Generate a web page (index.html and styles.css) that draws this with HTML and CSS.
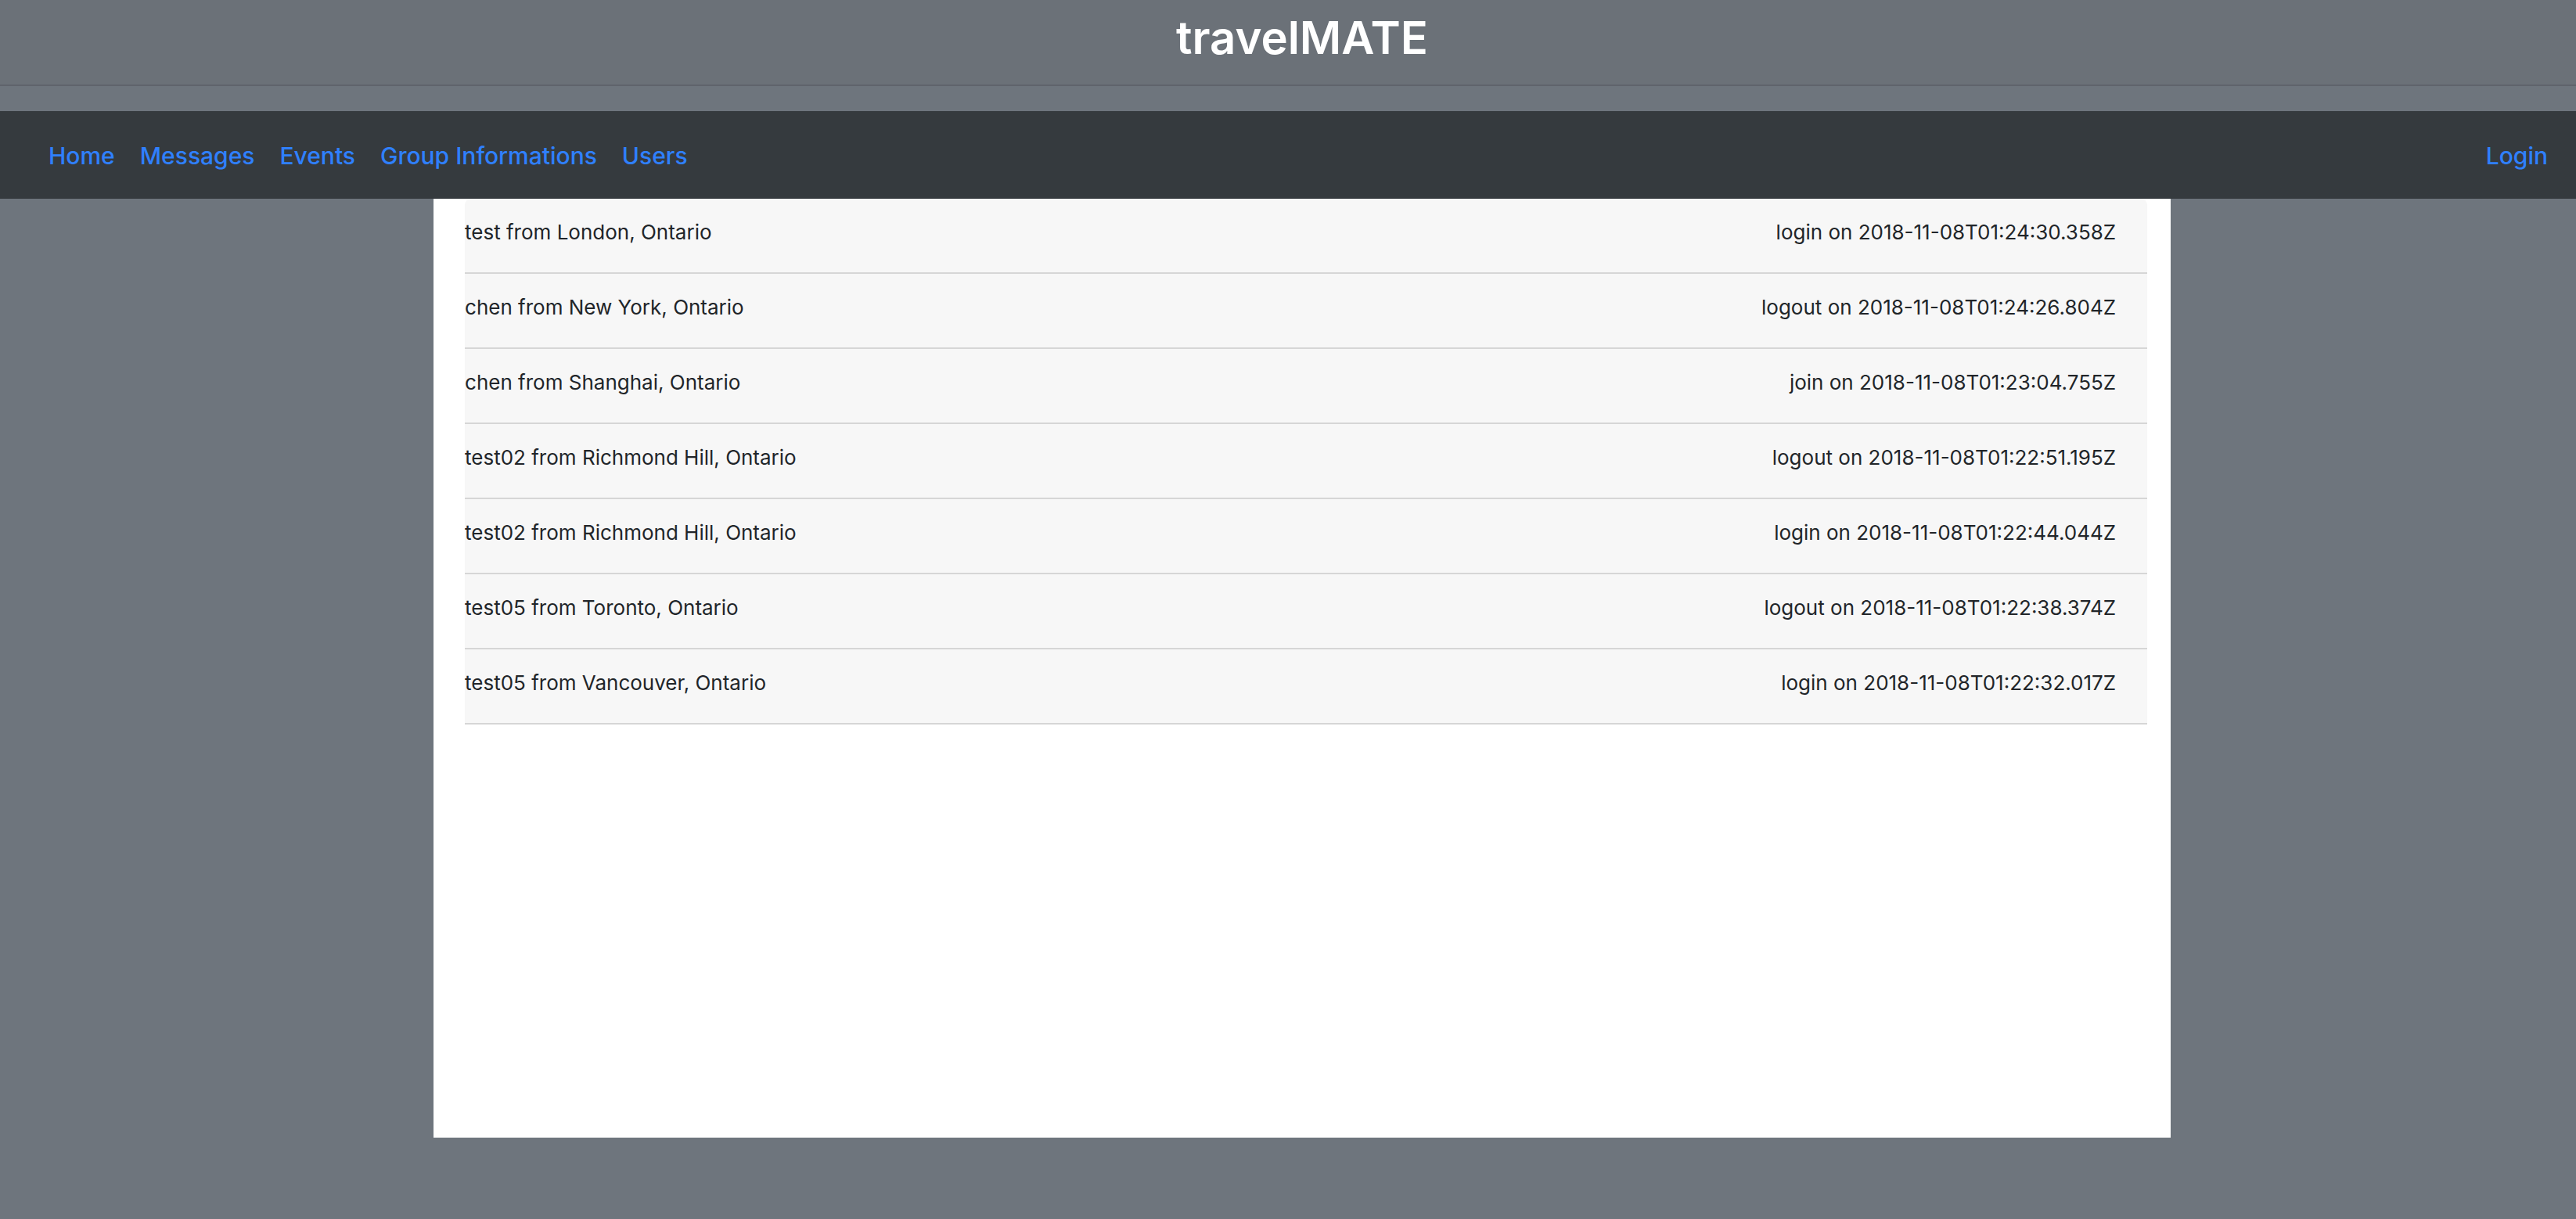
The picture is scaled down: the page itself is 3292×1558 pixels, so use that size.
FILE: index.html
```html
<!DOCTYPE html>
<html lang="en">
<head>
<meta charset="utf-8">
<title>travelMATE</title>
<link rel="stylesheet" href="styles.css">
</head>
<body>
<header class="site-header"><h1>travelMATE</h1></header>
<nav class="navbar">
<ul class="nav-list">
<li><a href="#">Home</a></li>
<li><a href="#">Messages</a></li>
<li><a href="#">Events</a></li>
<li><a href="#">Group Informations</a></li>
<li><a href="#">Users</a></li>
</ul>
<a class="login" href="#">Login</a>
</nav>
<main class="panel">
<ul class="activity">
<li><span>test from London, Ontario</span><span>login on 2018-11-08T01:24:30.358Z</span></li>
<li><span>chen from New York, Ontario</span><span>logout on 2018-11-08T01:24:26.804Z</span></li>
<li><span>chen from Shanghai, Ontario</span><span>join on 2018-11-08T01:23:04.755Z</span></li>
<li><span>test02 from Richmond Hill, Ontario</span><span>logout on 2018-11-08T01:22:51.195Z</span></li>
<li><span>test02 from Richmond Hill, Ontario</span><span>login on 2018-11-08T01:22:44.044Z</span></li>
<li><span>test05 from Toronto, Ontario</span><span>logout on 2018-11-08T01:22:38.374Z</span></li>
<li><span>test05 from Vancouver, Ontario</span><span>login on 2018-11-08T01:22:32.017Z</span></li>
</ul>
</main>
</body>
</html>
```
FILE: styles.css
```css
* { box-sizing: border-box; }
body {
  margin: 0;
  min-height: 100vh;
  background: #6e757d;
  color: #212529;
  font-family: Inter, "Liberation Sans", sans-serif;
  font-size: 26px;
  line-height: 40px;
}
.site-header {
  height: 110px;
  margin-bottom: 32px;
  background: #6b7178;
  border-bottom: 2px solid #5f636b;
  text-align: center;
}
h1 {
  margin: 0;
  padding-top: 10px;
  padding-left: 36px;
  color: #fff;
  font-size: 58px;
  font-weight: 600;
  line-height: 76px;
}
.navbar {
  display: flex;
  justify-content: space-between;
  align-items: center;
  height: 112px;
  padding: 2px 36px 0 62px;
  background: #353a3e;
  font-size: 30px;
  font-weight: 500;
}
.navbar a { color: #2f80ff; text-decoration: none; }
.nav-list { display: flex; gap: 32px; }
ul { margin: 0; padding: 0; list-style: none; }
.panel {
  width: 67.44%;
  min-height: 1200px;
  margin-left: 16.83%;
  padding: 0 30px 0 40px;
  background: #fff;
}
.activity li {
  display: flex;
  justify-content: space-between;
  height: 96px;
  padding: 23px 40px 0 0;
  background: #f7f7f7;
  border-bottom: 2px solid #d6d6d6;
}
.activity li:first-child { border-radius: 8px 8px 0 0; }
```
